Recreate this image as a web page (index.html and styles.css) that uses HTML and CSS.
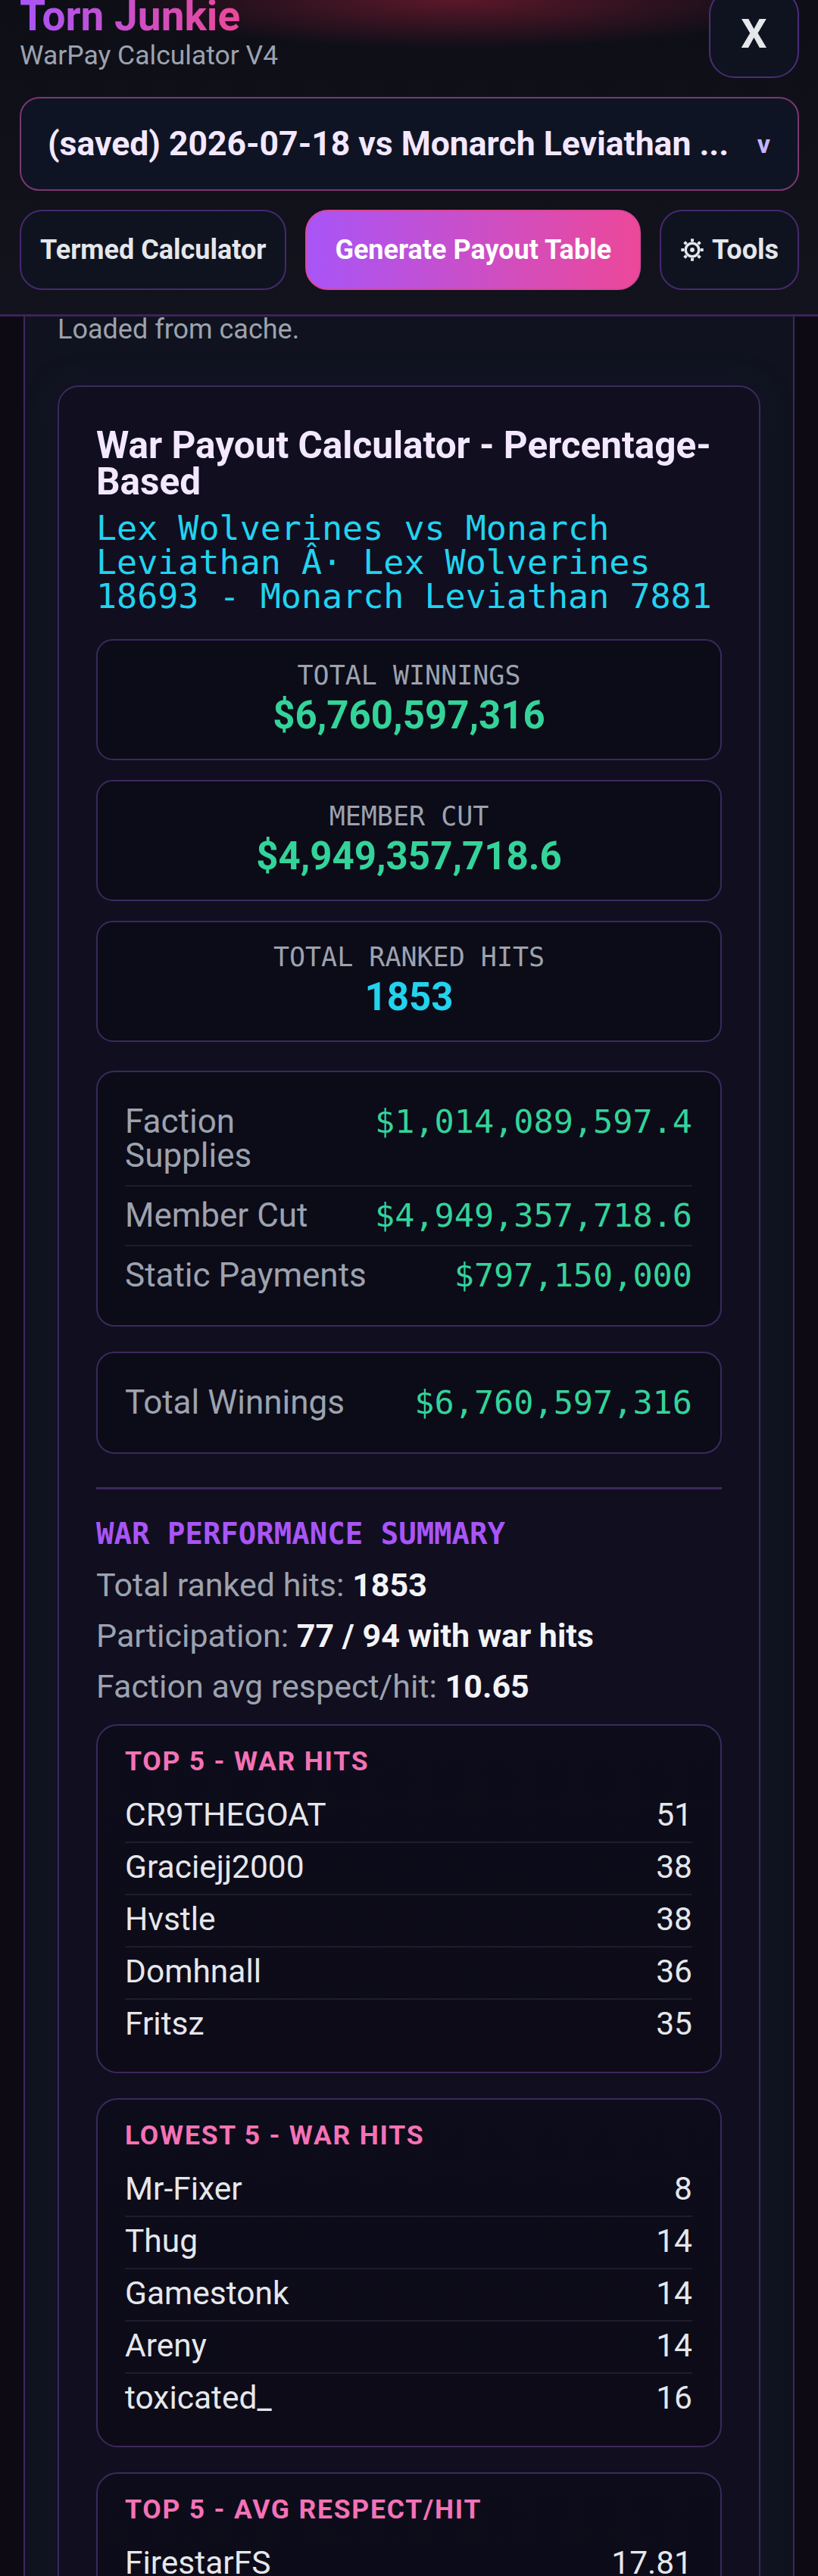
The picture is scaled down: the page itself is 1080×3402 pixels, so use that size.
FILE: index.html
```html
<!DOCTYPE html>
<html lang="en">
<head>
  <meta charset="UTF-8">
  <title>Torn Junkie - WarPay Calculator V4</title>
  <link rel="stylesheet" href="styles.css">
</head>
<body>

<header class="topbar">
  <div class="topbar-row">
    <div class="brand">
      <h1 class="brand-title">Torn Junkie</h1>
      <div class="brand-sub">WarPay Calculator V4</div>
    </div>
    <button class="close-btn">X</button>
  </div>

  <div class="war-select">
    <span class="war-select-text">(saved) 2026-07-18 vs Monarch Leviathan ...</span>
    <span class="war-select-arrow">v</span>
  </div>

  <div class="actions">
    <button class="btn">Termed Calculator</button>
    <button class="btn btn-primary">Generate Payout Table</button>
    <button class="btn btn-tools">
      <svg class="gear" viewBox="0 0 24 24" width="32" height="32" fill="none" stroke="currentColor">
        <circle cx="12" cy="12" r="6.6" stroke-width="2.6"/>
        <circle cx="12" cy="12" r="2.2" fill="currentColor" stroke="none"/>
        <g stroke-width="3">
          <line x1="12" y1="1" x2="12" y2="4"/>
          <line x1="12" y1="20" x2="12" y2="23"/>
          <line x1="1" y1="12" x2="4" y2="12"/>
          <line x1="20" y1="12" x2="23" y2="12"/>
          <line x1="4.2" y1="4.2" x2="6.3" y2="6.3"/>
          <line x1="17.7" y1="17.7" x2="19.8" y2="19.8"/>
          <line x1="19.8" y1="4.2" x2="17.7" y2="6.3"/>
          <line x1="4.2" y1="19.8" x2="6.3" y2="17.7"/>
        </g>
      </svg>
      Tools
    </button>
  </div>
</header>

<main class="panel">
  <p class="status">Loaded from cache.</p>

  <section class="card">
    <h2 class="card-title">War Payout Calculator - Percentage-Based</h2>
    <div class="matchup">Lex Wolverines vs Monarch Leviathan Â· Lex Wolverines 18693 - Monarch Leviathan 7881</div>

    <div class="stat">
      <div class="stat-label">Total Winnings</div>
      <div class="stat-value green">$6,760,597,316</div>
    </div>
    <div class="stat">
      <div class="stat-label">Member Cut</div>
      <div class="stat-value green">$4,949,357,718.6</div>
    </div>
    <div class="stat">
      <div class="stat-label">Total Ranked Hits</div>
      <div class="stat-value cyan">1853</div>
    </div>

    <div class="breakdown">
      <div class="breakdown-row">
        <span class="breakdown-label">Faction Supplies</span>
        <span class="breakdown-value">$1,014,089,597.4</span>
      </div>
      <div class="breakdown-row">
        <span class="breakdown-label">Member Cut</span>
        <span class="breakdown-value">$4,949,357,718.6</span>
      </div>
      <div class="breakdown-row">
        <span class="breakdown-label">Static Payments</span>
        <span class="breakdown-value">$797,150,000</span>
      </div>
    </div>

    <div class="breakdown breakdown-total">
      <div class="breakdown-row">
        <span class="breakdown-label">Total Winnings</span>
        <span class="breakdown-value">$6,760,597,316</span>
      </div>
    </div>

    <hr class="divider">

    <h3 class="summary-title">War Performance Summary</h3>
    <p class="summary-line">Total ranked hits: <b>1853</b></p>
    <p class="summary-line">Participation: <b>77 / 94 with war hits</b></p>
    <p class="summary-line">Faction avg respect/hit: <b>10.65</b></p>

    <div class="rank-box">
      <div class="rank-title">Top 5 - War Hits</div>
      <div class="rank-row"><span>CR9THEGOAT</span><span>51</span></div>
      <div class="rank-row"><span>Graciejj2000</span><span>38</span></div>
      <div class="rank-row"><span>Hvstle</span><span>38</span></div>
      <div class="rank-row"><span>Domhnall</span><span>36</span></div>
      <div class="rank-row"><span>Fritsz</span><span>35</span></div>
    </div>

    <div class="rank-box">
      <div class="rank-title">Lowest 5 - War Hits</div>
      <div class="rank-row"><span>Mr-Fixer</span><span>8</span></div>
      <div class="rank-row"><span>Thug</span><span>14</span></div>
      <div class="rank-row"><span>Gamestonk</span><span>14</span></div>
      <div class="rank-row"><span>Areny</span><span>14</span></div>
      <div class="rank-row"><span>toxicated_</span><span>16</span></div>
    </div>

    <div class="rank-box">
      <div class="rank-title">Top 5 - Avg Respect/Hit</div>
      <div class="rank-row"><span>FirestarFS</span><span>17.81</span></div>
      <div class="rank-row"><span>CR9THEGOAT</span><span>16.92</span></div>
      <div class="rank-row"><span>Hvstle</span><span>15.40</span></div>
    </div>
  </section>
</main>

</body>
</html>
```

FILE: styles.css
```css
* {
  box-sizing: border-box;
}

body {
  margin: 0;
  background-color: #0d0a14;
  font-family: Roboto, "Noto Sans", sans-serif;
  color: #e5e7eb;
}

/* header */

.topbar {
  background:
    radial-gradient(ellipse 440px 64px at 56% 0, rgba(110, 26, 46, 0.8), rgba(110, 26, 46, 0) 100%),
    linear-gradient(180deg, #0e0e17 0%, #12131c 100%);
  padding: 0 25px 32px 26px;
  border-bottom: 3px solid #3b2458;
  overflow: hidden;
}

.topbar-row {
  display: flex;
  justify-content: space-between;
  align-items: flex-start;
}

.brand-title {
  display: inline-block;
  margin: -6px 0 0;
  font-size: 55px;
  line-height: 54px;
  font-weight: 700;
  background: linear-gradient(90deg, #a855f7, #ec4899);
  -webkit-background-clip: text;
  background-clip: text;
  color: transparent;
}

.brand-sub {
  margin-top: 5px;
  font-size: 35.5px;
  line-height: 40px;
  color: #9ca3af;
}

.close-btn {
  width: 119px;
  height: 118px;
  margin-top: -15px;
  border: 2px solid #4a2d78;
  border-radius: 34px;
  background: #0f1320;
  color: #e5e7eb;
  font-family: Roboto, sans-serif;
  font-size: 54px;
  font-weight: 700;
  display: flex;
  align-items: center;
  justify-content: center;
  padding: 0;
}

.war-select {
  margin-top: 25px;
  height: 124px;
  border: 2px solid #7e3670;
  border-radius: 26px;
  background: #0f1424;
  display: flex;
  align-items: center;
  gap: 18px;
  padding: 0 36px 0 35px;
}

.war-select-text {
  flex: 1;
  white-space: nowrap;
  overflow: hidden;
  text-overflow: ellipsis;
  font-size: 44.5px;
  font-weight: 700;
  color: #f3e8ff;
}

.war-select-arrow {
  font-size: 34px;
  font-weight: 700;
  color: #c4b5fd;
}

.actions {
  display: flex;
  gap: 25px;
  margin-top: 25px;
}

.btn {
  height: 106px;
  padding: 0 25px;
  border: 2px solid #45296e;
  border-radius: 30px;
  background: #0f1320;
  color: #e5e7eb;
  font-family: Roboto, sans-serif;
  font-size: 36px;
  font-weight: 700;
  display: flex;
  align-items: center;
  justify-content: center;
  gap: 10px;
  white-space: nowrap;
}

.btn-primary {
  flex: 1;
  border-color: #d9479b;
  background: linear-gradient(90deg, #a855f7, #ec4899);
  color: #ffffff;
}

.gear {
  flex: none;
}

/* panel */

.panel {
  margin: 0 31px;
  padding: 0 43px 60px;
  background: #10131f;
  border-left: 2px solid #3b2a5c;
  border-right: 2px solid #3b2a5c;
}

.status {
  margin: 0;
  font-size: 36px;
  line-height: 35px;
  color: #9ca3af;
}

.card {
  margin-top: 56px;
  padding: 53px 49px;
  background: #110e20;
  border: 2px solid #3b2a5c;
  border-radius: 28px;
  box-shadow: 0 0 40px rgba(30, 20, 60, 0.35);
}

.card-title {
  margin: 0;
  font-size: 49.5px;
  line-height: 48px;
  font-weight: 700;
  color: #f3e8ff;
}

.matchup {
  margin-top: 15px;
  font-family: "DejaVu Sans Mono", "Liberation Mono", monospace;
  font-size: 45px;
  line-height: 45px;
  color: #22d3ee;
}

.stat {
  margin-top: 26px;
  padding: 25px 20px 26px;
  background: #0c0b18;
  border: 2px solid #3a2a5c;
  border-radius: 22px;
  text-align: center;
}

.matchup + .stat {
  margin-top: 34px;
}

.stat-label {
  font-family: "DejaVu Sans Mono", "Liberation Mono", monospace;
  font-size: 35px;
  line-height: 42px;
  text-transform: uppercase;
  color: #9ca3af;
}

.stat-value {
  margin-top: 1px;
  font-size: 51px;
  line-height: 62px;
  font-weight: 700;
}

.green {
  color: #34d399;
}

.cyan {
  color: #22d3ee;
}

.breakdown {
  margin-top: 38px;
  padding: 27px 37px 27px 36px;
  background: #0c0b18;
  border: 2px solid #3a2a5c;
  border-radius: 24px;
}

.breakdown-total {
  margin-top: 33px;
}

.breakdown-row {
  display: flex;
  justify-content: space-between;
  align-items: baseline;
  gap: 40px;
  padding: 16px 0;
  border-bottom: 2px solid #1e1d2b;
}

.breakdown-row:last-child {
  border-bottom: none;
}

.breakdown-label {
  font-size: 44px;
  line-height: 45px;
  color: #9ca3af;
}

.breakdown-value {
  flex: none;
  font-family: "DejaVu Sans Mono", "Liberation Mono", monospace;
  font-size: 43.5px;
  line-height: 45px;
  color: #34d399;
  white-space: nowrap;
}

.divider {
  margin: 44px 0 0;
  height: 3px;
  border: none;
  background: #3b2a5c;
}

.summary-title {
  margin: 35px 0 0;
  font-family: "DejaVu Sans Mono", "Liberation Mono", monospace;
  font-size: 39px;
  line-height: 47px;
  font-weight: 700;
  text-transform: uppercase;
  color: #a855f7;
}

.summary-line {
  margin: 20px 0 0;
  font-size: 43px;
  line-height: 47px;
  color: #9ca3af;
}

.summary-title + .summary-line {
  margin-top: 21px;
}

.summary-line b {
  color: #f3f4f6;
}

.rank-box {
  margin-top: 33px;
  padding: 27px 37px 28px 36px;
  background: linear-gradient(180deg, #0d0c1a, #0d0b18);
  border: 2px solid #3a2a5c;
  border-radius: 28px;
}

.summary-line + .rank-box {
  margin-top: 26px;
}

.rank-title {
  margin-bottom: 18px;
  font-size: 35.5px;
  line-height: 41px;
  font-weight: 700;
  letter-spacing: 0.05em;
  text-transform: uppercase;
  color: #f472b6;
}

.rank-row {
  display: flex;
  justify-content: space-between;
  padding: 7px 0 10px;
  font-size: 42.5px;
  line-height: 50px;
  color: #e5e7eb;
  border-bottom: 2px solid #1e1d2b;
}

.rank-row:last-child {
  border-bottom: none;
}
```
